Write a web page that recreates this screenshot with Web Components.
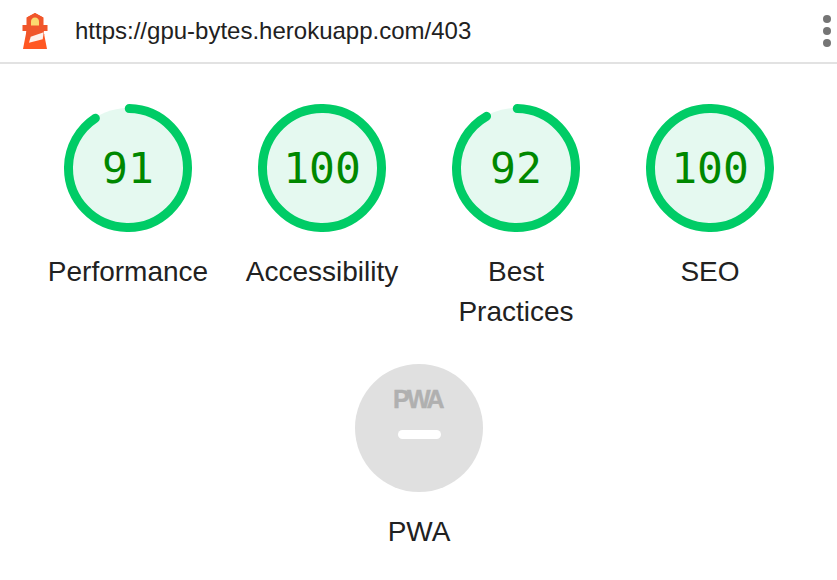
<!DOCTYPE html>
<html>
<head>
<meta charset="utf-8">
<style>
  html, body { margin: 0; background: #fff; }
  body { font-family: "Liberation Sans", Arial, sans-serif; color: #212121; overflow: hidden; }
</style>
</head>
<body>
<report-topbar url="https://gpu-bytes.herokuapp.com/403"></report-topbar>
<gauge-list>
  <score-gauge score="91" label="Performance"></score-gauge>
  <score-gauge score="100" label="Accessibility"></score-gauge>
  <score-gauge score="92" label="Best Practices"></score-gauge>
  <score-gauge score="100" label="SEO"></score-gauge>
  <pwa-gauge label="PWA"></pwa-gauge>
</gauge-list>
<script>
class ReportTopbar extends HTMLElement {
  constructor() {
    super();
    this.attachShadow({ mode: "open" });
  }

  connectedCallback() {
    this.shadowRoot.innerHTML = `
      <style>
        :host {
          display: flex;
          align-items: center;
          height: 62px;
          border-bottom: 2px solid #e2e2e2;
          padding: 0 0 0 22px;
        }
        svg.logo { width: 26px; height: 36px; flex: none; }
        .url { margin-left: 27px; font-size: 24px; flex: 1; color: #212121; white-space: nowrap; }
        .dots { display: flex; flex-direction: column; gap: 3.7px; margin-right: 6px; }
        .dots i { display: block; width: 8.500px; height: 8.500px; border-radius: 50%; background: #757575; }
      </style>
      <svg class="logo" viewBox="0 0 26 36">
        <path d="M13 0 L21.300 4.500 V12 H25.300 V18 H21.500 L25 36 H1 L4.500 18 H.7 V12 H4.700 V4.500 Z" fill="#ff5722"/>
        <path d="M13 0 L21.300 4.500 V12 H25.300 V18 H21.500 L22.300 22 L3.700 27 L4.500 18 H.7 V12 H4.700 V4.500 Z" fill="#f0562b"/>
        <path d="M13 4.500 C15.500 4.500 17 6.500 17 8.500 V12.500 H9 V8.500 C9 6.500 10.500 4.500 13 4.500 Z" fill="#fbd96f"/>
        <path d="M8.700 23.700 L21.700 19.300 L20.700 26.300 L7 29.700 Z" fill="#fdf1ec"/>
      </svg>
      <span class="url">${this.getAttribute("url")}</span>
      <div class="dots"><i></i><i></i><i></i></div>
    `;
  }
}

class GaugeList extends HTMLElement {
  constructor() {
    super();
    this.attachShadow({ mode: "open" });
    this.shadowRoot.innerHTML = `
      <style>
        :host {
          display: flex;
          flex-wrap: wrap;
          justify-content: center;
          row-gap: 32px;
          padding: 40px 30px 0 31px;
        }
      </style>
      <slot></slot>
    `;
  }
}

const gaugeItemStyle = `
  :host {
    display: flex;
    flex-direction: column;
    align-items: center;
    width: 194px;
    font-size: 28px;
    line-height: 40px;
    color: #212121;
    text-align: center;
  }
  .label { margin-top: 20px; padding: 0 10px; width: 194px; box-sizing: border-box; }
  .break { padding: 0 34px; }
`;

class ScoreGauge extends HTMLElement {
  constructor() {
    super();
    this.attachShadow({ mode: "open" });
  }

  connectedCallback() {
    const score = Number(this.getAttribute("score"));
    const label = this.getAttribute("label");
    const circ = 2 * Math.PI * 59.5;
    const dash = score >= 100 ? circ + 1 : (circ * score * 0.992) / 100;
    this.shadowRoot.innerHTML = `
      <style>
        ${gaugeItemStyle}
        .dial { position: relative; width: 128px; height: 128px; }
        svg { display: block; width: 128px; height: 128px; }
        .num {
          position: absolute;
          inset: 0;
          display: flex;
          align-items: center;
          justify-content: center;
          font-family: "DejaVu Sans Mono", monospace;
          font-size: 43px;
          color: #008800;
        }
      </style>
      <div class="dial">
        <svg viewBox="0 0 128 128">
          <circle cx="64" cy="64" r="60" fill="#e5f9f0"/>
          <circle cx="64" cy="64" r="59.500" fill="none" stroke="#00cc66" stroke-width="9"
            stroke-linecap="round" stroke-dasharray="${dash} ${circ}"
            transform="rotate(-88.800 64 64)"/>
        </svg>
        <div class="num">${score}</div>
      </div>
      <div class="label ${label.includes(" ") ? "break" : ""}">${label}</div>
    `;
  }
}

class PwaGauge extends HTMLElement {
  constructor() {
    super();
    this.attachShadow({ mode: "open" });
  }

  connectedCallback() {
    this.shadowRoot.innerHTML = `
      <style>
        ${gaugeItemStyle}
        .badge {
          display: flex;
          flex-direction: column;
          align-items: center;
          width: 128px;
          height: 128px;
          border-radius: 50%;
          background: #e0e0e0;
        }
        .mark { margin-top: 22px; display: block; width: 80px; height: 28px; }
        .mark text {
          font: 700 25px "Liberation Sans", Arial, sans-serif;
          letter-spacing: -2.600px;
          fill: #b0b0b0;
          stroke: #b0b0b0;
          stroke-width: .4px;
        }
        .dash { width: 43px; height: 9px; margin-top: 16px; border-radius: 5px; background: #fff; }
      </style>
      <div class="badge">
        <svg class="mark" viewBox="0 0 80 28">
          <text x="38.500" y="22" text-anchor="middle">PWA</text>
        </svg>
        <div class="dash"></div>
      </div>
      <div class="label">${this.getAttribute("label")}</div>
    `;
  }
}

customElements.define("report-topbar", ReportTopbar);
customElements.define("gauge-list", GaugeList);
customElements.define("score-gauge", ScoreGauge);
customElements.define("pwa-gauge", PwaGauge);
</script>
</body>
</html>
